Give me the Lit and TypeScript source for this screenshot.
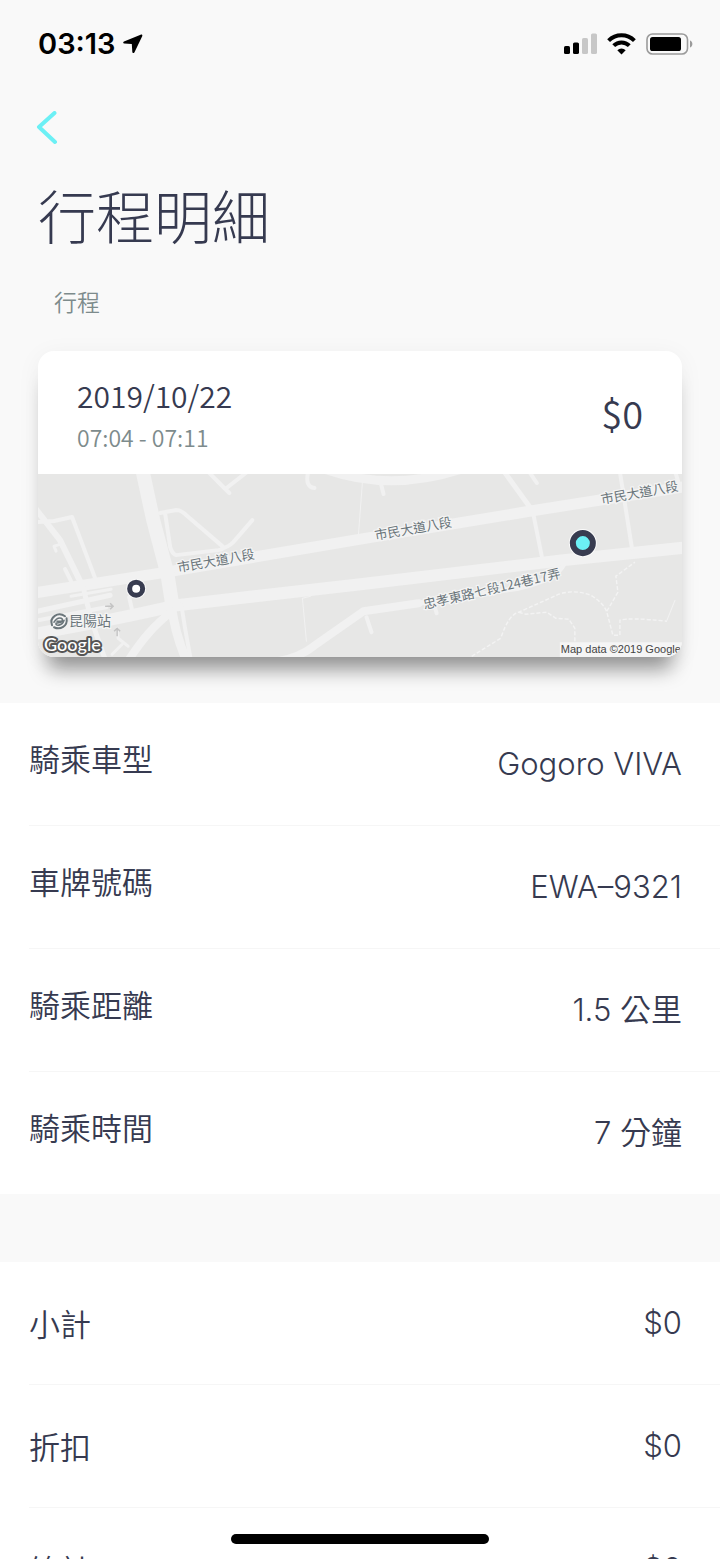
import { LitElement, html, svg, css } from "lit";
import { customElement, property } from "lit/decorators.js";

interface Entry {
  label: string;
  value: string;
}

const RIDE: Entry[] = [
  { label: "騎乘車型", value: "Gogoro VIVA" },
  { label: "車牌號碼", value: "EWA–9321" },
  { label: "騎乘距離", value: "1.5 公里" },
  { label: "騎乘時間", value: "7 分鐘" },
];

const COST: Entry[] = [
  { label: "小計", value: "$0" },
  { label: "折扣", value: "$0" },
  { label: "總計", value: "$0" },
];

@customElement("status-bar")
class StatusBar extends LitElement {
  static styles = css`
    :host {
      display: flex;
      align-items: center;
      justify-content: space-between;
      height: 88px;
      padding: 0 27px 0 38px;
      color: #000;
    }
    .clock,
    .icons {
      display: flex;
      align-items: center;
    }
    .clock {
      gap: 7px;
      font: 600 29px/36px Inter, "Liberation Sans", sans-serif;
    }
    .icons {
      gap: 10px;
    }
    svg {
      display: block;
    }
  `;

  render() {
    return html`
      <div class="clock">
        <time>03:13</time>
        <svg width="20" height="20" viewBox="0 0 20 20" aria-hidden="true">
          <path
            d="M17.600.7 1 7.400C-.2 8 0 9.300 1.200 9.500L8.800 10 9.300 17.800C9.400 19.300 10.800 19.500 11.500 18.200L19.200 2.300C19.700 1 18.900.2 17.600.7Z"
          />
        </svg>
      </div>
      <div class="icons">
        <svg width="33" height="22" viewBox="0 0 33 22" aria-hidden="true">
          <rect x="0" y="13" width="6" height="8" rx="1.6" />
          <rect x="9" y="9.500" width="6" height="11.500" rx="1.600" />
          <rect x="18" y="5" width="6" height="16" rx="1.6" fill="#c7c7c7" />
          <rect x="27" y="0.500" width="6" height="20.500" rx="1.600" fill="#c7c7c7" />
        </svg>
        <svg width="29" height="22" viewBox="0 0 29 22" aria-hidden="true">
          <g fill="none" stroke="#000" stroke-width="4">
            <path d="M1.600 7.600a18.300 18.300 0 0 1 25.800 0" />
            <path d="M6.700 12.700a11 11 0 0 1 15.600 0" />
          </g>
          <path d="M14.500 21.500 10.300 17.300a6 6 0 0 1 8.400 0Z" />
        </svg>
        <svg width="47" height="22" viewBox="0 0 47 22" aria-hidden="true">
          <rect x="1" y="1" width="40.500" height="20" rx="5.500" fill="none" stroke="#9b9b9b" stroke-width="1.600" />
          <rect x="4" y="4" width="31" height="14" rx="2.600" />
          <path d="M44 7.500c3.200 1.200 3.200 5.800 0 7Z" fill="#9b9b9b" />
        </svg>
      </div>
    `;
  }
}

@customElement("route-map")
class RouteMap extends LitElement {
  static styles = css`
    :host {
      display: block;
    }
    .map {
      display: block;
      width: 100%;
      height: auto;
      background: #e7e7e6;
    }
    .road {
      fill: none;
      stroke: #f1f1f1;
      stroke-linecap: round;
      stroke-linejoin: round;
    }
    .trail {
      fill: none;
      stroke: #f3f3f3;
      stroke-width: 1.4;
      stroke-dasharray: 4 2;
    }
    .name {
      font: 13px "Noto Sans CJK TC", sans-serif;
      fill: #6b767b;
      stroke: #f4f4f4;
      stroke-width: 2.5;
      paint-order: stroke;
    }
    .station {
      font-size: 14px;
    }
    .brand {
      font: 500 18px Lato, sans-serif;
      fill: #fff;
      stroke: #555;
      stroke-width: 4;
      stroke-linejoin: round;
      paint-order: stroke;
    }
    .credit {
      font: 11px "Liberation Sans", sans-serif;
      fill: #444;
    }
  `;

  private road(d: string, width: number) {
    return svg`<path class="road" d=${d} stroke-width=${width} />`;
  }

  render() {
    return html`
      <svg class="map" viewBox="0 0 643 183" role="img" aria-label="路線地圖">
        ${this.road("M-5 119 122 99 322 65 492 37 650 12", 11)}
        ${this.road("M-5 160C40 152 80 145 139 131L322 110 525 86 650 73", 12)}
        ${this.road("M104-5 115 46 129 99 134 130", 14)}
        ${this.road("M133 130C136 155 142 172 149 188", 9)}
        ${this.road("M143 130 147 155 153 188", 4)}
        ${this.road("M134 137C115 152 104 165 89 188", 8)}
        ${this.road("M-5 138 72 121", 5)}
        ${this.road("M-5 147 68 133", 4)}
        ${this.road("M33 122 73 115", 3)}
        ${this.road("M45 113 53 145 68 188", 5)}
        ${this.road("M-3 34 22 66 42 107", 6)}
        ${this.road("M-3 48 16 47 34 43 57 104", 4)}
        ${this.road("M23 70 16 72 18 77", 3)}
        ${this.road("M27 95 33 107", 4)}
        ${this.road("M91 123 94 136", 4)}
        ${this.road("M79 154 80 164 90 172M74 180 84 170", 3)}
        ${this.road("M122 39 138 36Q143 36 149 42L184 72Q187 75 180 76L138 81Q134 80 132 73L127 40", 4)}
        ${this.road("M184 74Q190 73 195 68L214 46", 4)}
        ${this.road("M168-4 191 19M187 15 210-3", 4)}
        ${this.road("M270-3Q266 13 276 14", 4)}
        ${this.road("M286-5Q350 18 420-4", 9)}
        ${this.road("M342 8 345 20", 4)}
        ${this.road("M324 7 320 60", 1)}
        ${this.road("M465-3 491 33", 5)}
        ${this.road("M490-3 498 9", 4)}
        ${this.road("M495 42 503 82", 4)}
        ${this.road("M581-2 593 74", 4)}
        ${this.road("M636-3 640 10", 4)}
        ${this.road("M233 188Q260 184 275 172L325 137 380 129", 8)}
        ${this.road("M380 129 480 114Q518 105 525 90", 5)}
        ${this.road("M328 143 333 158", 4)}
        ${this.road("M396 132 398 139", 4)}
        ${this.road("M264 124 268 167M264 124 272 122", 1)}
        ${this.road("M628 146 636 126", 1)}
        <path class="trail" d="M433 182 462 164Q470 140 480 138L520 120Q535 115 552 121 565 129 568 138L574 161H581V146Q590 143 628 147" />
        <path class="trail" d="M480 138 487 140 508 138 517 144 530 145 536 154V170M568 137 579 118 577 102 596 88" />
        <path d="M67 132h8m-3-3 3 3-3 3M79 162v-8m-3 3 3-3 3 3" fill="none" stroke="#c4c4c4" stroke-width="1.500" />

        <text class="name" transform="translate(140 98) rotate(-10)">市民大道八段</text>
        <text class="name" transform="translate(337 66) rotate(-10)">市民大道八段</text>
        <text class="name" transform="translate(563 30) rotate(-10)">市民大道八段</text>
        <text class="name" transform="translate(386 135) rotate(-13)">忠孝東路七段124巷17弄</text>

        <ellipse cx="21" cy="147" rx="9" ry="8" fill="#f4f4f4" />
        <g fill="none" stroke="#6b767b" stroke-linecap="round">
          <path d="M14 151C11 143 20 137 27 142M28.500 144C30 152 22 156 16 153" stroke-width="2" />
          <path d="M16 148C19 142 26 143 24 147L19 147M26 146C24 152 17 152 18 149L23 148" stroke-width="1.600" />
        </g>
        <text class="name station" x="31" y="152">昆陽站</text>
        <text class="brand" x="6" y="177">Google</text>

        <circle cx="98" cy="114.500" r="10" fill="#f8f8f8" />
        <circle cx="98" cy="114.500" r="6.500" fill="#fff" stroke="#383c50" stroke-width="5" />
        <circle cx="544" cy="69" r="14" fill="#fafafa" />
        <circle cx="544" cy="69" r="10" fill="#6cf0f5" stroke="#383c50" stroke-width="6" />

        <rect x="521" y="168" width="122" height="15" fill="#f5f5f5" />
        <text class="credit" x="522" y="179">Map data ©2019 Google</text>
      </svg>
    `;
  }
}

@customElement("detail-list")
class DetailList extends LitElement {
  @property({ attribute: false }) entries: Entry[] = [];

  static styles = css`
    :host {
      display: block;
      background: #fff;
      color: #363a50;
    }
    .list {
      margin: 0;
      padding-left: 29px;
    }
    .row {
      display: flex;
      align-items: center;
      justify-content: space-between;
      height: 122px;
      padding-right: 38px;
      border-bottom: 1px solid #f6f6f6;
    }
    .row:last-child {
      border-bottom: 0;
    }
    .label,
    .value {
      margin: 0;
      font-size: 31px;
      font-weight: 350;
      line-height: 44px;
    }
    .label {
      font-family: "Noto Sans CJK TC", sans-serif;
      padding-bottom: var(--label-lift, 0);
    }
    .value {
      font-family: Inter, "Noto Sans CJK TC", sans-serif;
    }
  `;

  render() {
    return html`
      <dl class="list">
        ${this.entries.map(
          (e) => html`
            <div class="row">
              <dt class="label">${e.label}</dt>
              <dd class="value">${e.value}</dd>
            </div>
          `
        )}
      </dl>
    `;
  }
}

@customElement("app-root")
class AppRoot extends LitElement {
  static styles = css`
    :host {
      display: block;
      height: 100vh;
      overflow: hidden;
      background: #f9f9f9;
      color: #363a50;
      font-family: "Noto Sans CJK TC", sans-serif;
      font-weight: 350;
    }
    .screen {
      height: 100%;
      overflow-y: auto;
      scrollbar-width: none;
    }
    .top {
      padding: 0 38px 46px;
    }
    .back {
      display: block;
      margin: 0;
      padding: 23px 24px 14px 0;
      border: 0;
      background: none;
      cursor: pointer;
      margin-left: -2px;
    }
    .back svg {
      display: block;
    }
    .title {
      margin: 0;
      padding-top: 13px;
      font-size: 58px;
      font-weight: 300;
      line-height: 84px;
    }
    .section {
      margin: 0;
      padding: 27px 16px 32px;
      font-size: 23px;
      font-weight: 350;
      line-height: 36px;
      color: #7d8b8c;
    }
    .card {
      border-radius: 16px;
      background: #fff;
      box-shadow: 0 22px 20px -10px rgba(0, 0, 0, 0.4), 0 4px 24px rgba(0, 0, 0, 0.05);
    }
    .clip {
      overflow: hidden;
      border-radius: 16px;
    }
    .summary {
      display: flex;
      align-items: center;
      justify-content: space-between;
      padding: 22px 39px 17px;
    }
    .date {
      font-size: 30px;
      line-height: 44px;
    }
    .time {
      font-size: 23px;
      line-height: 40px;
      color: #7d8b8c;
    }
    .price {
      padding-bottom: 4px;
      font-size: 38px;
      line-height: 44px;
    }
    .ride {
      --label-lift: 12px;
    }
    .cost {
      margin-top: 68px;
    }
    .home {
      position: fixed;
      bottom: 15px;
      left: 50%;
      width: 258px;
      height: 10px;
      margin-left: -129px;
      border-radius: 5px;
      background: #000;
    }
  `;

  render() {
    return html`
      <div class="screen">
        <status-bar></status-bar>
        <header class="top">
          <button class="back" type="button" aria-label="返回">
            <svg width="24" height="34" viewBox="0 0 24 34" aria-hidden="true">
              <path d="M18.500 2 3 16 19 31" fill="none" stroke="#6cf0f5" stroke-width="4" stroke-linecap="round" stroke-linejoin="round" />
            </svg>
          </button>
          <h1 class="title">行程明細</h1>
          <h2 class="section">行程</h2>
          <article class="card">
            <div class="clip">
              <div class="summary">
                <div>
                  <div class="date">2019/10/22</div>
                  <div class="time">07:04 - 07:11</div>
                </div>
                <div class="price">$0</div>
              </div>
              <route-map></route-map>
            </div>
          </article>
        </header>
        <detail-list class="ride" .entries=${RIDE}></detail-list>
        <detail-list class="cost" .entries=${COST}></detail-list>
      </div>
      <div class="home"></div>
    `;
  }
}
